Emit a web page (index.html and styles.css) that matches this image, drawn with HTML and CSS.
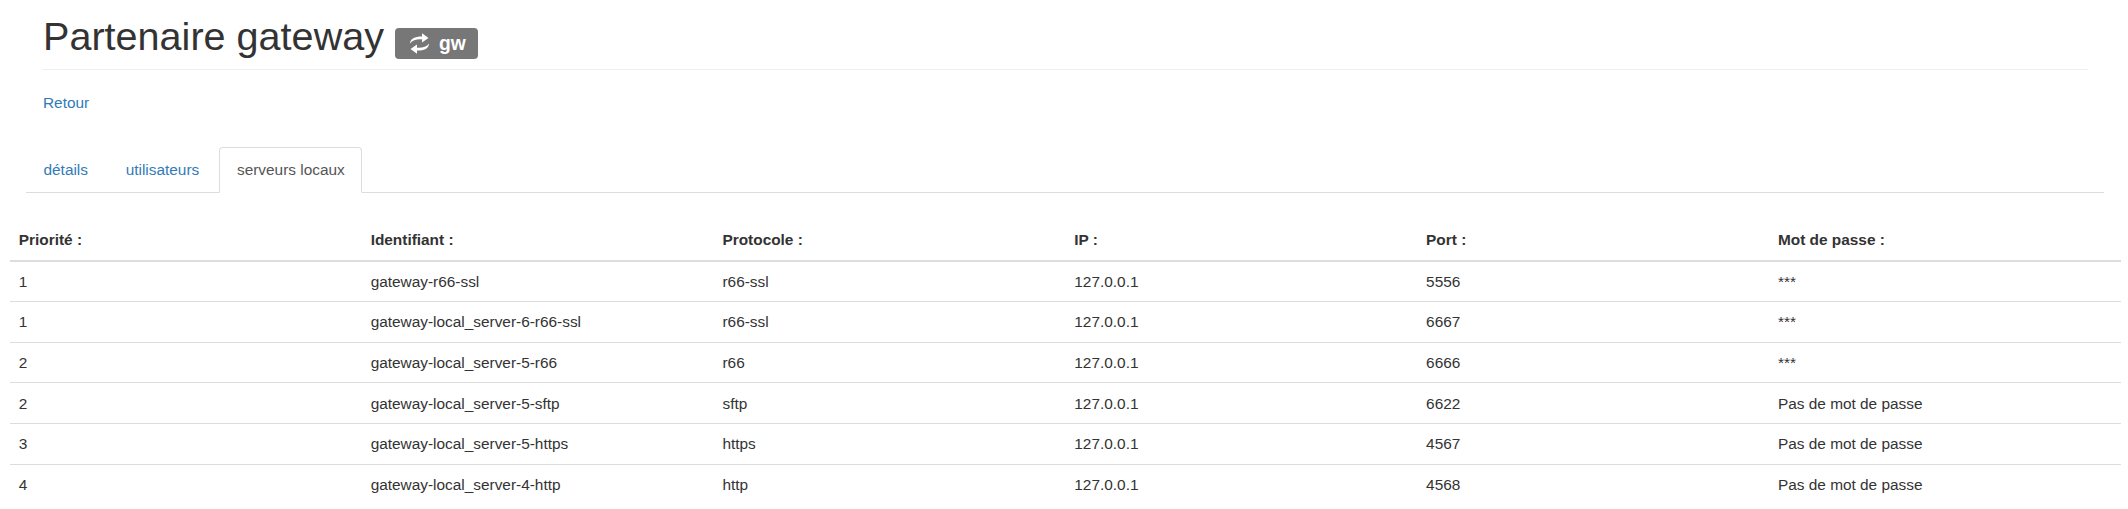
FILE: index.html
```html
<!DOCTYPE html>
<html lang="fr">
<head>
    <meta charset="UTF-8">
    <title>Partenaire gateway</title>
    <link rel="stylesheet" href="styles.css">
</head>
<body>
    <div class="container">
        <div class="page-header">
            <h1>Partenaire gateway
                <span class="label">
                    <svg class="icon" viewBox="0 0 20 21"><path d="M0.5 10.5 C0.8 5.5 5 3.4 12.5 3.4 L12.5 0.2 L19 5 L12.5 9.6 L12.5 6.3 C7 6 3 7 0.5 10.5 Z M19.5 10.5 C19.2 15.5 15 17.6 7.5 17.6 L7.5 20.8 L1 16 L7.5 11.4 L7.5 14.7 C13 15 17 14 19.5 10.5 Z"/></svg>
                    gw
                </span>
            </h1>
        </div>
        <p class="back"><a href="#">Retour</a></p>
    </div>
    <ul class="tabs">
        <li><a href="#">détails</a></li>
        <li><a href="#">utilisateurs</a></li>
        <li class="active"><a href="#">serveurs locaux</a></li>
    </ul>
    <table class="servers">
        <thead>
            <tr>
                <th>Priorité :</th>
                <th>Identifiant :</th>
                <th>Protocole :</th>
                <th>IP :</th>
                <th>Port :</th>
                <th>Mot de passe :</th>
            </tr>
        </thead>
        <tbody>
            <tr><td>1</td><td>gateway-r66-ssl</td><td>r66-ssl</td><td>127.0.0.1</td><td>5556</td><td>***</td></tr>
            <tr><td>1</td><td>gateway-local_server-6-r66-ssl</td><td>r66-ssl</td><td>127.0.0.1</td><td>6667</td><td>***</td></tr>
            <tr><td>2</td><td>gateway-local_server-5-r66</td><td>r66</td><td>127.0.0.1</td><td>6666</td><td>***</td></tr>
            <tr><td>2</td><td>gateway-local_server-5-sftp</td><td>sftp</td><td>127.0.0.1</td><td>6622</td><td>Pas de mot de passe</td></tr>
            <tr><td>3</td><td>gateway-local_server-5-https</td><td>https</td><td>127.0.0.1</td><td>4567</td><td>Pas de mot de passe</td></tr>
            <tr><td>4</td><td>gateway-local_server-4-http</td><td>http</td><td>127.0.0.1</td><td>4568</td><td>Pas de mot de passe</td></tr>
        </tbody>
    </table>
</body>
</html>
```
FILE: styles.css
```css
html {
    overflow: hidden;
}
body {
    margin: 0;
    padding: 0 7px 0 10px;
    height: 509px;
    overflow: hidden;
    font-family: "Liberation Sans", Arial, sans-serif;
    font-size: 15.4px;
    line-height: 22px;
    color: #333;
    background-color: #fff;
}
a {
    color: #337ab7;
    text-decoration: none;
}
.container {
    padding: 0 33px;
}
.page-header {
    height: 69px;
    border-bottom: 1px solid #eee;
}
h1 {
    margin: 0;
    padding-top: 14px;
    font-size: 39.6px;
    font-weight: 500;
    line-height: 44px;
}
.label {
    display: inline-flex;
    align-items: center;
    gap: 9px;
    height: 31px;
    padding: 0 12px 0 14px;
    box-sizing: border-box;
    border-radius: 4px;
    background-color: #777;
    color: #fff;
    font-size: 19.3px;
    font-weight: 700;
    line-height: 1;
    vertical-align: -4px;
}
.icon {
    width: 21px;
    height: 21px;
    fill: #fff;
}
.back {
    margin: 0;
    padding-top: 22px;
    height: 55px;
}
.tabs {
    display: flex;
    list-style: none;
    margin: 0 17px 0 16px;
    padding: 0;
    border-bottom: 1px solid #ddd;
    height: 45px;
}
.tabs li {
    margin-right: 2.7px;
}
.tabs a {
    display: block;
    padding: 11px 16.5px;
    height: 46px;
    box-sizing: border-box;
    border: 1px solid transparent;
    border-radius: 4px 4px 0 0;
}
.tabs .active a {
    color: #555;
    background-color: #fff;
    border-color: #ddd #ddd #fff;
}
.servers {
    width: 2111px;
    margin-top: 27px;
    table-layout: fixed;
    border-collapse: collapse;
}
.servers th, .servers td {
    text-align: left;
    vertical-align: top;
}
.servers th {
    padding: 8.8px;
    font-weight: 700;
    border-bottom: 2px solid #ddd;
}
.servers td {
    padding: 9.3px 8.8px 8.3px;
    border-bottom: 1px solid #ddd;
}
.servers tr:last-child td {
    border-bottom: 0;
}
```
